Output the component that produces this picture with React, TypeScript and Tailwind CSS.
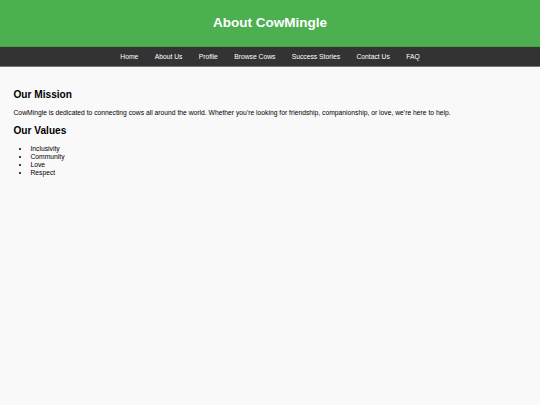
export default function App() {
  const links = ["Home", "About Us", "Profile", "Browse Cows", "Success Stories", "Contact Us", "FAQ"];
  const values = ["Inclusivity", "Community", "Love", "Respect"];

  return (
    <div className="min-h-[405px] bg-[#f9f9f9] text-black font-['Liberation_Sans',Arial,sans-serif]">
      {/* HEADER */}
      <header className="h-[47px] bg-[#4caf50] flex items-center justify-center border-b border-[#43a047]">
        <h1 className="text-[13.5px] leading-[15.5px] font-bold text-white">About CowMingle</h1>
      </header>

      {/* NAV */}
      <nav className="h-[20px] bg-[#333333] border-b border-[#777777] flex items-center justify-center gap-[16.3px]">
        {links.map((l) => (
          <a key={l} href="#" className="text-white text-[6.75px] leading-[7.76px]">
            {l}
          </a>
        ))}
      </nav>

      {/* CONTENT */}
      <main className="px-[13.5px] pt-[22px]">
        <h2 className="text-[10.125px] leading-[11.64px] font-bold">Our Mission</h2>
        <p className="text-[6.75px] leading-[7.76px] mt-[8.4px]">
          CowMingle is dedicated to connecting cows all around the world. Whether you're looking for friendship,
          companionship, or love, we're here to help.
        </p>
        <h2 className="text-[10.125px] leading-[11.64px] font-bold mt-[8.4px]">Our Values</h2>
        <ul className="list-disc pl-[16.9px] mt-[8.4px] text-[6.75px] leading-[7.76px]">
          {values.map((v) => (
            <li key={v}>{v}</li>
          ))}
        </ul>
      </main>
    </div>
  );
}
